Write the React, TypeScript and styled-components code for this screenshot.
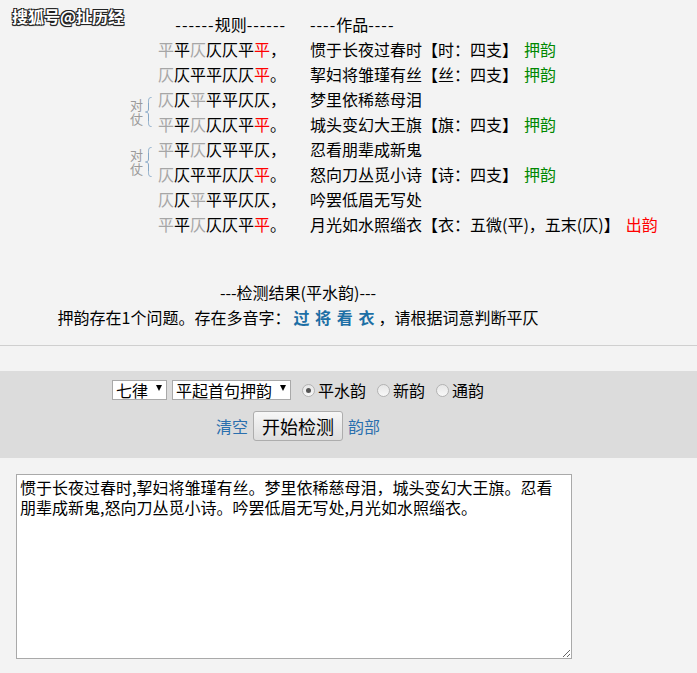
import styled, { createGlobalStyle } from "styled-components";

const GlobalStyle = createGlobalStyle`
  body {
    margin: 0;
    background: #f3f3f3;
    font-family: "Noto Sans CJK SC", "Liberation Sans", sans-serif;
    font-size: 16px;
    color: #000;
  }
`;

const Page = styled.div`
  position: relative;
  width: 697px;
  min-height: 673px;
`;

const Watermark = styled.div`
  position: absolute;
  top: 5px;
  left: 12px;
  font-size: 16px;
  font-weight: bold;
  line-height: 22px;
  color: #fff;
  text-shadow: 1px 1px 0 #222, -1px -1px 0 #222, 1px -1px 0 #222,
    -1px 1px 0 #222, 0 1px 1px #222;
`;

const Rules = styled.div`
  display: grid;
  grid-template-columns: 158px 128px 24px auto;
  grid-auto-rows: 25px;
  line-height: 25px;
  padding-top: 12px;
  white-space: nowrap;
`;

const Cell = styled.div<{ $row: number; $col: string }>`
  grid-row: ${(p) => p.$row};
  grid-column: ${(p) => p.$col};
`;

const HeaderRule = styled(Cell)`
  justify-self: end;
`;

const Dash = styled.span`
  letter-spacing: 1px;
`;

const Tone = styled.span<{ $tone: "free" | "fixed" | "rhyme" }>`
  color: ${(p) =>
    p.$tone === "free" ? "#a6a6a6" : p.$tone === "rhyme" ? "#f00" : "#000"};
`;

const Pair = styled.div<{ $row: number }>`
  grid-row: ${(p) => p.$row} / span 2;
  grid-column: 1;
  display: flex;
  align-items: center;
  justify-content: flex-end;
  gap: 2px;
  padding-right: 6px;
`;

const PairLabel = styled.div`
  width: 13px;
  font-size: 13px;
  line-height: 14px;
  color: #9a9a9a;
  white-space: normal;
`;

const Tag = styled.span<{ $ok: boolean }>`
  margin-left: 6px;
  color: ${(p) => (p.$ok ? "#080" : "#f00")};
`;

const Result = styled.div`
  width: 596px;
  margin-top: 43px;
  text-align: center;
  line-height: 25px;
`;

const Multi = styled.b`
  color: #1d6fa5;
  word-spacing: 2px;
  margin: 0 4px 0 3px;
`;

const Divider = styled.hr`
  margin: 15px 0 25px;
  border: none;
  border-top: 1px solid #cfcfcf;
`;

const Band = styled.div`
  background: #dcdcdc;
  height: 87px;
  box-sizing: border-box;
  padding-top: 9px;
`;

const BandRow = styled.div<{ $h: number; $top?: number }>`
  width: 596px;
  height: ${(p) => p.$h}px;
  margin-top: ${(p) => p.$top ?? 0}px;
  display: flex;
  align-items: center;
  justify-content: center;
  gap: 5px;
`;

const SelectBox = styled.div`
  height: 20px;
  box-sizing: border-box;
  display: inline-flex;
  align-items: center;
  gap: 8px;
  padding: 0 4px 0 3px;
  background: #fff;
  border: 1px solid #a9a9a9;
  line-height: 18px;
`;

const Arrow = styled.span`
  width: 0;
  height: 0;
  margin-top: -5px;
  border-left: 3.5px solid transparent;
  border-right: 3.5px solid transparent;
  border-top: 6px solid #000;
`;

const Radio = styled.label`
  display: inline-flex;
  align-items: center;
  gap: 3px;
  margin-left: 6px;
  line-height: 20px;
`;

const RadioDot = styled.span<{ $checked?: boolean }>`
  width: 13px;
  height: 13px;
  box-sizing: border-box;
  border-radius: 50%;
  border: 1px solid #b3b3b3;
  background: linear-gradient(#e6e6e6, #f8f8f8);
  display: flex;
  align-items: center;
  justify-content: center;
  &::after {
    content: "";
    width: 5px;
    height: 5px;
    border-radius: 50%;
    background: ${(p) => (p.$checked ? "#555" : "transparent")};
  }
`;

const Link = styled.a`
  color: #2a6fae;
  text-decoration: none;
  line-height: 20px;
`;

const Button = styled.button`
  height: 30px;
  padding: 0 8px;
  font-family: inherit;
  font-size: 18px;
  line-height: 28px;
  color: #000;
  border: 1px solid #adadad;
  border-radius: 3px;
  background: linear-gradient(#f7f7f7, #dedede);
`;

const Editor = styled.textarea`
  display: block;
  margin: 16px 0 0 16px;
  width: 556px;
  height: 185px;
  box-sizing: border-box;
  padding: 2px 12px 2px 3px;
  border: 1px solid #a9a9a9;
  background: #fff;
  font-family: "Noto Sans CJK SC", "Liberation Sans", sans-serif;
  font-size: 16px;
  line-height: 20px;
  color: #000;
  resize: both;
  outline: none;
`;

type Tn = "free" | "fixed" | "rhyme";

const rules: { tones: Tn[]; text: string; end: string }[] = [
  { text: "平平仄仄仄平平", tones: ["free", "fixed", "free", "fixed", "fixed", "fixed", "rhyme"], end: "，" },
  { text: "仄仄平平仄仄平", tones: ["free", "fixed", "fixed", "fixed", "fixed", "fixed", "rhyme"], end: "。" },
  { text: "仄仄平平平仄仄", tones: ["free", "fixed", "free", "fixed", "fixed", "fixed", "fixed"], end: "，" },
  { text: "平平仄仄仄平平", tones: ["free", "fixed", "free", "fixed", "fixed", "fixed", "rhyme"], end: "。" },
  { text: "平平仄仄平平仄", tones: ["free", "fixed", "free", "fixed", "fixed", "fixed", "fixed"], end: "，" },
  { text: "仄仄平平仄仄平", tones: ["free", "fixed", "fixed", "fixed", "fixed", "fixed", "rhyme"], end: "。" },
  { text: "仄仄平平平仄仄", tones: ["free", "fixed", "free", "fixed", "fixed", "fixed", "fixed"], end: "，" },
  { text: "平平仄仄仄平平", tones: ["free", "fixed", "free", "fixed", "fixed", "fixed", "rhyme"], end: "。" },
];

const poem: { line: string; note?: string; ok?: boolean }[] = [
  { line: "惯于长夜过春时", note: "【时：四支】", ok: true },
  { line: "挈妇将雏瑾有丝", note: "【丝：四支】", ok: true },
  { line: "梦里依稀慈母泪" },
  { line: "城头变幻大王旗", note: "【旗：四支】", ok: true },
  { line: "忍看朋辈成新鬼" },
  { line: "怒向刀丛觅小诗", note: "【诗：四支】", ok: true },
  { line: "吟罢低眉无写处" },
  { line: "月光如水照缁衣", note: "【衣：五微(平)，五末(仄)】", ok: false },
];

function Brace() {
  return (
    <svg width="7" height="30" viewBox="0 0 7 30">
      <path
        d="M6.5 0.5 C3.5 0.5 3.5 2.5 3.5 5.5 L3.5 12 C3.5 14 2.5 15 0.5 15 C2.5 15 3.5 16 3.5 18 L3.5 24.5 C3.5 27.5 3.5 29.5 6.5 29.5"
        fill="none"
        stroke="#85a8c8"
        strokeWidth="1"
      />
    </svg>
  );
}

const text =
  "惯于长夜过春时,挈妇将雏瑾有丝。梦里依稀慈母泪，城头变幻大王旗。忍看朋辈成新鬼,怒向刀丛觅小诗。吟罢低眉无写处,月光如水照缁衣。";

export default function App() {
  return (
    <Page>
      <GlobalStyle />
      <Watermark>搜狐号@扯历经</Watermark>
      <Rules>
        <HeaderRule $row={1} $col="1 / 3">
          <Dash>------</Dash>规则<Dash>------</Dash>
        </HeaderRule>
        <Cell $row={1} $col="4">
          <Dash>----</Dash>作品<Dash>----</Dash>
        </Cell>
        <Pair $row={4}>
          <PairLabel>对仗</PairLabel>
          <Brace />
        </Pair>
        <Pair $row={6}>
          <PairLabel>对仗</PairLabel>
          <Brace />
        </Pair>
        {rules.map((r, i) => (
          <Cell key={"r" + i} $row={i + 2} $col="2">
            {r.text.split("").map((c, j) => (
              <Tone key={j} $tone={r.tones[j]}>
                {c}
              </Tone>
            ))}
            {r.end}
          </Cell>
        ))}
        {poem.map((p, i) => (
          <Cell key={"p" + i} $row={i + 2} $col="4">
            {p.line}
            {p.note}
            {p.note && <Tag $ok={!!p.ok}>{p.ok ? "押韵" : "出韵"}</Tag>}
          </Cell>
        ))}
      </Rules>
      <Result>
        <div>---检测结果(平水韵)---</div>
        <div>
          押韵存在1个问题。存在多音字：<Multi>过 将 看 衣</Multi>，请根据词意判断平仄
        </div>
      </Result>
      <Divider />
      <Band>
        <BandRow $h={20}>
          <SelectBox>
            七律<Arrow />
          </SelectBox>
          <SelectBox>
            平起首句押韵<Arrow />
          </SelectBox>
          <Radio>
            <RadioDot $checked />
            平水韵
          </Radio>
          <Radio>
            <RadioDot />
            新韵
          </Radio>
          <Radio>
            <RadioDot />
            通韵
          </Radio>
        </BandRow>
        <BandRow $h={30} $top={11}>
          <Link>清空</Link>
          <Button>开始检测</Button>
          <Link>韵部</Link>
        </BandRow>
      </Band>
      <Editor defaultValue={text} spellCheck={false} />
    </Page>
  );
}
